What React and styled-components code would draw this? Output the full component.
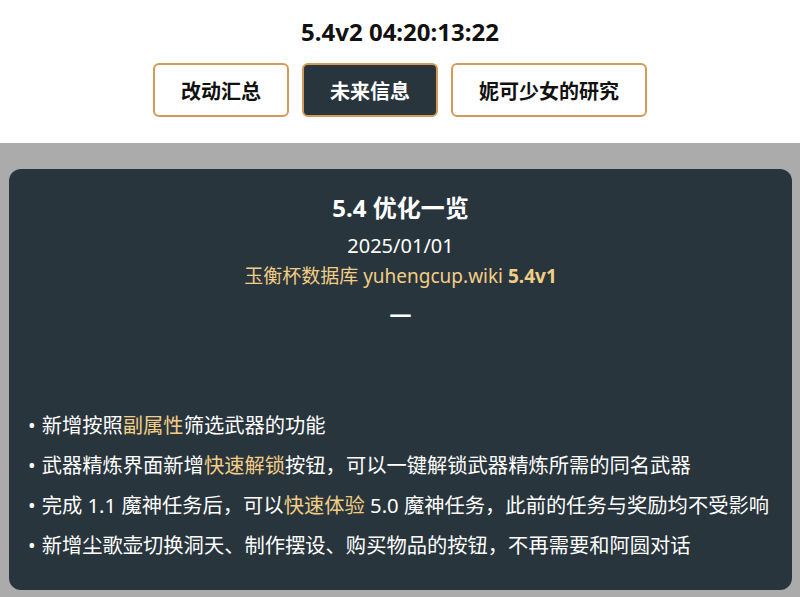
import React from "react";
import styled, { createGlobalStyle } from "styled-components";

const Global = createGlobalStyle`
  html, body { margin: 0; padding: 0; }
  body {
    background: #ababab;
    font-family: "Noto Sans", "Noto Sans CJK SC", sans-serif;
  }
`;

const Header = styled.header`
  background: #ffffff;
  height: 143px;
  display: flex;
  flex-direction: column;
  align-items: center;
  box-sizing: border-box;
  padding-top: 15px;
`;

const Clock = styled.div`
  font-size: 24px;
  font-weight: 700;
  line-height: 34px;
  color: #111;
`;

const Tabs = styled.nav`
  display: flex;
  gap: 13px;
  margin-top: 14px;
`;

const Tab = styled.button`
  height: 54px;
  box-sizing: border-box;
  padding: 0 26px;
  border: 2px solid #d39a58;
  border-radius: 6px;
  background: ${(p) => (p.$active ? "#29353d" : "#ffffff")};
  color: ${(p) => (p.$active ? "#ffffff" : "#111111")};
  font-family: "Noto Sans CJK SC", sans-serif;
  font-size: 20px;
  font-weight: 700;
  cursor: pointer;
`;

const Main = styled.main`
  padding: 26px 8px 7px 9px;
`;

const Card = styled.section`
  background: #29353d;
  border-radius: 12px;
  padding: 21px 19px 25px;
  color: #ffffff;
`;

const CardHead = styled.div`
  display: flex;
  flex-direction: column;
  align-items: center;
`;

const Title = styled.h2`
  margin: 0;
  font-size: 24px;
  font-weight: 700;
  line-height: 36px;
`;

const Meta = styled.div`
  font-size: ${(p) => (p.$gold ? 19 : 20)}px;
  line-height: 30px;
  margin-top: ${(p) => p.$mt || 0}px;
  color: ${(p) => (p.$gold ? "#f2cd85" : "#ffffff")};
`;

const Strong = styled.b`
  font-weight: 700;
`;

const Dash = styled.div`
  font-size: 22px;
  font-weight: 700;
  line-height: 30px;
  margin-top: 7px;
`;

const List = styled.ul`
  list-style: none;
  margin: 77px 0 0;
  padding: 0;
`;

const Item = styled.li`
  font-size: 20.3px;
  line-height: 40px;
  white-space: nowrap;
  &::before {
    content: "•";
    margin-right: 6px;
  }
`;

const Hi = styled.span`
  color: #f2cd85;
`;

export default function App() {
  return (
    <>
      <Global />
      <Header>
        <Clock>5.4v2 04:20:13:22</Clock>
        <Tabs>
          <Tab>改动汇总</Tab>
          <Tab $active>未来信息</Tab>
          <Tab>妮可少女的研究</Tab>
        </Tabs>
      </Header>
      <Main>
        <Card>
          <CardHead>
            <Title>5.4 优化一览</Title>
            <Meta $mt={5}>2025/01/01</Meta>
            <Meta $gold>
              玉衡杯数据库 yuhengcup.wiki <Strong>5.4v1</Strong>
            </Meta>
            <Dash>—</Dash>
          </CardHead>
          <List>
            <Item>
              新增按照<Hi>副属性</Hi>筛选武器的功能
            </Item>
            <Item>
              武器精炼界面新增<Hi>快速解锁</Hi>按钮，可以一键解锁武器精炼所需的同名武器
            </Item>
            <Item>
              完成 1.1 魔神任务后，可以<Hi>快速体验</Hi> 5.0 魔神任务，此前的任务与奖励均不受影响
            </Item>
            <Item>
              新增尘歌壶切换洞天、制作摆设、购买物品的按钮，不再需要和阿圆对话
            </Item>
          </List>
        </Card>
      </Main>
    </>
  );
}
